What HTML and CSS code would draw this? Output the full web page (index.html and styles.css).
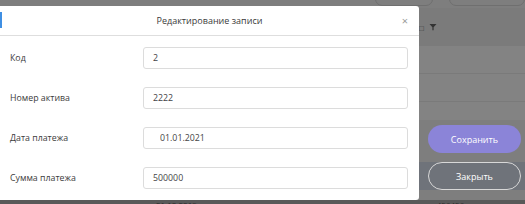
FILE: index.html
```html
<!DOCTYPE html>
<html lang="ru">
<head>
  <meta charset="UTF-8" />
  <title>Редактирование записи</title>
  <link rel="stylesheet" href="styles.css">
</head>
<body>

  <div class="page">
    <div class="tabs">
      <span class="tab tab-a"></span>
      <span class="tab tab-b"></span>
    </div>
    <div class="toolbar">
      <span class="tool">&#9633;</span>
      <svg class="funnel" width="8" height="8" viewBox="0 0 8 8">
        <path d="M0.5 1 H7.5 L4.6 4.2 V7.2 H3.4 V4.2 Z" fill="#333" />
      </svg>
    </div>
    <div class="grid-rows">
      <div class="grid-row"></div>
      <div class="grid-row"></div>
    </div>
    <div class="actions">
      <button class="btn btn-save">Сохранить</button>
      <div class="close-band">
        <button class="btn btn-close">Закрыть</button>
      </div>
    </div>
    <div class="bottom-row">
      <span class="cell-date">21.10.2019</span>
      <span class="cell-num">456456</span>
    </div>
  </div>

  <div class="modal">
    <div class="modal-header">
      <span class="accent"></span>
      <span class="modal-title">Редактирование записи</span>
      <span class="modal-x">&times;</span>
    </div>
    <form class="modal-body">
      <div class="field">
        <label for="code">Код</label>
        <input type="text" id="code" value="2" />
      </div>
      <div class="field">
        <label for="asset">Номер актива</label>
        <input type="text" id="asset" value="2222" />
      </div>
      <div class="field">
        <label for="date">Дата платежа</label>
        <input type="text" id="date" class="date" value="01.01.2021" />
      </div>
      <div class="field">
        <label for="sum">Сумма платежа</label>
        <input type="text" id="sum" value="500000" />
      </div>
    </form>
  </div>

</body>
</html>
```

FILE: styles.css
```css
* {
  box-sizing: border-box;
  margin: 0;
  padding: 0;
}

body {
  font-family: 'Open Sans', sans-serif;
  background-color: #7e7e7e;
  width: 525px;
  height: 204px;
  overflow: hidden;
  position: relative;
}

/* dimmed page under the dialog */
.page {
  display: flex;
  flex-direction: column;
  height: 204px;
  padding-left: 419px;
}

.tabs {
  height: 8px;
  display: flex;
  gap: 16px;
  margin-left: -44px;
}

.tab {
  display: block;
  height: 14px;
  margin-top: -8px;
  border: 1px solid #6f6f6f;
  border-radius: 12px;
}

.tab-a { width: 68px; }
.tab-b { width: 90px; }

.toolbar {
  height: 38px;
  display: flex;
  align-items: center;
  gap: 5px;
  font-size: 8px;
  color: #333333;
  background-color: #7b7b7b;
}

.grid-rows {
  background-color: #838383;
  height: 74px;
}

.grid-row {
  height: 28px;
  border-bottom: 1px solid #7a7a7a;
}

.actions {
  display: flex;
  flex-direction: column;
  gap: 9px;
  margin-top: 5px;
}

.btn {
  width: 93px;
  height: 28px;
  margin-left: 9px;
  border-radius: 14px;
  font-family: 'Open Sans', sans-serif;
  font-size: 9px;
  color: #ffffff;
}

.btn-save {
  background-color: #8b84d8;
  border: none;
}

.close-band {
  background-color: #6f737a;
  height: 28px;
}

.btn-close {
  background: transparent;
  border: 1px solid #d8d8d8;
}

.bottom-row {
  margin-top: auto;
  margin-left: -419px;
  height: 4px;
  background-color: #595959;
  font-size: 8px;
  color: #2a2a2a;
  line-height: 9px;
  overflow: hidden;
  display: flex;
  padding-left: 156px;
  gap: 240px;
}

/* dialog */
.modal {
  position: absolute;
  left: 0;
  top: 6px;
  width: 419px;
  height: 194px;
  background-color: #ffffff;
  border-radius: 0 3px 3px 0;
}

.modal-header {
  position: relative;
  height: 30px;
  border-bottom: 1px solid #dedede;
  display: flex;
  align-items: center;
  justify-content: center;
}

.accent {
  position: absolute;
  left: 0;
  top: 6px;
  width: 2px;
  height: 16px;
  background-color: #3f8fe3;
}

.modal-title {
  font-size: 9px;
  color: #3a3a3a;
}

.modal-x {
  position: absolute;
  right: 11px;
  top: 7px;
  font-size: 11px;
  color: #9a9a9a;
}

.modal-body {
  display: flex;
  flex-direction: column;
  gap: 18px;
  padding: 11px 11px 0 10px;
}

.field {
  display: flex;
  align-items: center;
  height: 22px;
}

label {
  width: 133px;
  font-size: 8.8px;
  color: #3c3c3c;
}

input {
  width: 265px;
  height: 22px;
  border: 1px solid #dcdcdc;
  border-radius: 3px;
  padding: 0 9px;
  font-family: 'Open Sans', sans-serif;
  font-size: 8.8px;
  color: #444444;
}

input.date {
  padding-left: 16px;
}
```
